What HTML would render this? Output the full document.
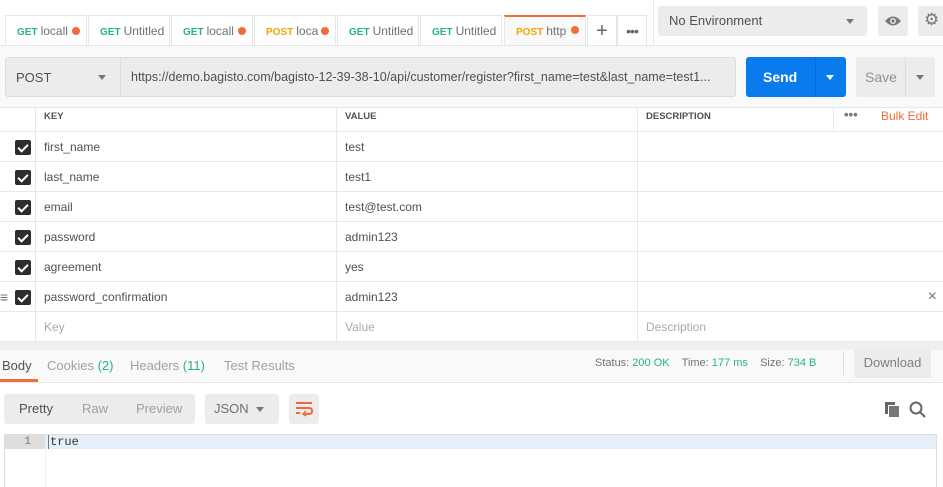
<!DOCTYPE html>
<html><head><style>
*{box-sizing:border-box;margin:0;padding:0}
body{width:943px;height:487px;overflow:hidden;background:#fff;font-family:"Liberation Sans",sans-serif;font-size:12px;color:#505050;position:relative}
.a{position:absolute}
.tab{position:absolute;top:15px;height:31px;width:82px;border:1px solid #e6e6e6;border-bottom:none;background:#fff;font-size:12px;line-height:31px;padding-left:11px;white-space:nowrap;overflow:hidden;color:#707070}
.g{color:#26b47f;font-weight:bold;font-size:10px;margin-right:3px}
.p{color:#f4a500;font-weight:bold;font-size:10px;margin-right:3px}
.dot{position:absolute;right:6px;top:11px;width:8px;height:8px;border-radius:50%;background:#f26b3a}
.row{position:absolute;left:0;width:943px;height:30px;border-bottom:1px solid #e8e8e8;font-size:12px;line-height:30px}
.row div{position:absolute;top:0;height:30px;padding-left:8px;border-left:1px solid #e8e8e8}
.cb{position:absolute;left:15px;top:8px;width:16px;height:15px;background:#2d2d2d;border-radius:2px}
.cb:after{content:"";position:absolute;left:5px;top:2px;width:4px;height:8px;border:solid #fff;border-width:0 2px 2px 0;transform:rotate(45deg)}
.btn{position:absolute;background:#ececec;border-radius:3px}
.car{position:absolute;width:0;height:0;border-left:4px solid transparent;border-right:4px solid transparent;border-top:5px solid #777}
</style></head><body>
<div class="tab" style="left:5px"><span class="g">GET</span>locall<span class="dot"></span></div>
<div class="tab" style="left:88px"><span class="g">GET</span>Untitled</div>
<div class="tab" style="left:171px"><span class="g">GET</span>locall<span class="dot"></span></div>
<div class="tab" style="left:254px"><span class="p">POST</span>loca<span class="dot"></span></div>
<div class="tab" style="left:337px"><span class="g">GET</span>Untitled</div>
<div class="tab" style="left:420px"><span class="g">GET</span>Untitled</div>
<div class="tab" style="left:504px;border-top:2px solid #f26b3a;background:#f9f9f9;line-height:29px"><span class="p">POST</span>http<span class="dot" style="top:9px"></span></div>
<div class="tab" style="left:587px;width:30px;padding:0;text-align:center;font-size:20px;color:#666">+</div>
<div class="tab" style="left:617px;width:30px;padding:0;text-align:center;font-size:14px;color:#666;letter-spacing:-1px">•••</div>
<div class="a" style="left:653px;top:0;width:1px;height:46px;background:#e6e6e6"></div>
<div class="a" style="left:0;top:45px;width:943px;height:62px;background:#f9f9f9;border-top:1px solid #e6e6e6"></div>
<div class="btn" style="left:658px;top:6px;width:209px;height:30px;font-size:13px;line-height:30px;padding-left:11px;color:#505050">No Environment</div>
<div class="car" style="left:846px;top:19px"></div>
<div class="btn" style="left:878px;top:6px;width:30px;height:30px"></div>
<svg class="a" style="left:884px;top:14px" width="18" height="14" viewBox="0 0 18 14"><path d="M1 7 Q9 -2 17 7 Q9 16 1 7Z" fill="#777"/><circle cx="9" cy="7" r="3" fill="#ececec"/><circle cx="9" cy="7" r="1.6" fill="#777"/></svg>
<div class="btn" style="left:918px;top:6px;width:30px;height:30px"></div>
<div class="a" style="left:924px;top:10px;font-size:17px;color:#777;line-height:20px">⚙</div>
<div class="a" style="left:5px;top:57px;width:731px;height:40px;background:#ececec;border:1px solid #ddd;border-radius:3px"></div>
<div class="a" style="left:120px;top:58px;width:1px;height:38px;background:#ddd"></div>
<div class="a" style="left:16px;top:70px;font-size:13px;color:#505050">POST</div>
<div class="car" style="left:98px;top:75px"></div>
<div class="a" style="left:131px;top:70px;font-size:12.5px;color:#505050;white-space:nowrap">https://demo.bagisto.com/bagisto-12-39-38-10/api/customer/register?first_name=test&amp;last_name=test1...</div>
<div class="a" style="left:746px;top:57px;width:100px;height:40px;background:#097bed;border-radius:3px"></div>
<div class="a" style="left:815px;top:57px;width:1px;height:40px;background:#0a6ad0"></div>
<div class="a" style="left:763px;top:69px;font-size:14px;font-weight:bold;color:#fff">Send</div>
<div class="car" style="left:826px;top:75px;border-top-color:#fff"></div>
<div class="btn" style="left:856px;top:57px;width:79px;height:40px"></div>
<div class="a" style="left:905px;top:58px;width:1px;height:38px;background:#ddd"></div>
<div class="a" style="left:865px;top:69px;font-size:14px;color:#909090">Save</div>
<div class="car" style="left:916px;top:75px"></div>
<div class="a" style="left:0;top:107px;width:943px;height:1px;background:#e8e8e8"></div>
<div class="row" style="top:107px;height:25px;line-height:20px;font-size:9.5px;font-weight:bold;color:#505050"><div style="left:35px;height:25px">KEY</div><div style="left:336px;height:25px">VALUE</div><div style="left:637px;height:25px">DESCRIPTION</div><div style="left:833px;height:25px;font-size:13px;color:#777;line-height:16px;padding-left:10px">•••</div><div style="left:870px;height:25px;border:none;color:#f26b3a;font-weight:normal;font-size:12px;line-height:19px;padding-left:11px">Bulk Edit</div></div>
<div class="row" style="top:132px"><span class="cb"></span><div style="left:35px">first_name</div><div style="left:336px">test</div><div style="left:637px"></div></div>
<div class="row" style="top:162px"><span class="cb"></span><div style="left:35px">last_name</div><div style="left:336px">test1</div><div style="left:637px"></div></div>
<div class="row" style="top:192px"><span class="cb"></span><div style="left:35px">email</div><div style="left:336px">test@test.com</div><div style="left:637px"></div></div>
<div class="row" style="top:222px"><span class="cb"></span><div style="left:35px">password</div><div style="left:336px">admin123</div><div style="left:637px"></div></div>
<div class="row" style="top:252px"><span class="cb"></span><div style="left:35px">agreement</div><div style="left:336px">yes</div><div style="left:637px"></div></div>
<div class="row" style="top:282px"><span style="position:absolute;left:0;top:0;font-size:14px;color:#777">≡</span><span class="cb"></span><div style="left:35px">password_confirmation</div><div style="left:336px">admin123</div><div style="left:637px"></div><span style="position:absolute;right:6px;top:0;font-size:16px;color:#777">×</span></div>
<div class="row" style="top:312px;color:#aaa"><div style="left:35px">Key</div><div style="left:336px">Value</div><div style="left:637px">Description</div></div>
<div class="a" style="left:0;top:342px;width:943px;height:8px;background:#f0f0f0"></div>
<div class="a" style="left:0;top:350px;width:943px;height:33px;background:#f9f9f9;border-bottom:1px solid #e6e6e6"></div>
<div class="a" style="left:2px;top:358px;font-size:13px;color:#505050">Body</div>
<div class="a" style="left:0;top:379px;width:38px;height:3px;background:#f26b3a"></div>
<div class="a" style="left:47px;top:358px;font-size:13px;color:#a0a0a0">Cookies <span style="color:#26b47f">(2)</span></div>
<div class="a" style="left:130px;top:358px;font-size:13px;color:#a0a0a0">Headers <span style="color:#26b47f">(11)</span></div>
<div class="a" style="left:224px;top:358px;font-size:13px;color:#a0a0a0">Test Results</div>
<div class="a" style="left:595px;top:357px;font-size:11px;color:#707070;white-space:nowrap">Status: <span style="color:#26b47f">200 OK</span>&nbsp;&nbsp;&nbsp; Time: <span style="color:#26b47f">177 ms</span>&nbsp;&nbsp;&nbsp; Size: <span style="color:#26b47f">734 B</span></div>
<div class="a" style="left:843px;top:351px;width:1px;height:24px;background:#ddd"></div>
<div class="btn" style="left:854px;top:348px;width:77px;height:30px;line-height:30px;text-align:center;font-size:13px;color:#808080">Download</div>
<div class="btn" style="left:4px;top:394px;width:191px;height:30px;font-size:13px;line-height:30px"><span class="a" style="left:15px;color:#505050">Pretty</span><span class="a" style="left:78px;color:#a0a0a0">Raw</span><span class="a" style="left:132px;color:#a0a0a0">Preview</span></div>
<div class="btn" style="left:205px;top:394px;width:74px;height:30px;font-size:13px;line-height:30px;padding-left:9px;color:#707070">JSON</div>
<div class="car" style="left:256px;top:407px"></div>
<div class="btn" style="left:289px;top:394px;width:30px;height:30px"></div>
<svg class="a" style="left:295px;top:401px" width="18" height="16" viewBox="0 0 18 16"><g stroke="#f26b3a" stroke-width="2" fill="none"><path d="M1 2H17M1 7H14Q17 7 17 10Q17 13 14 13H9M1 12H5"/><path d="M11 10L8 13L11 15" stroke-width="1.5"/></g></svg>
<div class="a" style="left:885px;top:402px;width:10px;height:12px;background:#666"></div>
<div class="a" style="left:888px;top:405px;width:11px;height:12px;background:#777;border-left:1px solid #fff;border-top:1px solid #fff"></div>
<svg class="a" style="left:909px;top:401px" width="18" height="18" viewBox="0 0 18 18"><circle cx="7" cy="7" r="5.5" stroke="#666" stroke-width="2" fill="none"/><path d="M11 11L16 16" stroke="#666" stroke-width="2"/></svg>
<div class="a" style="left:4px;top:434px;width:933px;height:53px;border:1px solid #ddd;border-bottom:none;background:#fff"></div>
<div class="a" style="left:45px;top:435px;width:1px;height:52px;background:#eee"></div>
<div class="a" style="left:5px;top:435px;width:40px;height:14px;background:#ddd;text-align:right;padding-right:14px;font-family:'Liberation Mono',monospace;font-size:11px;color:#777;line-height:14px">1</div>
<div class="a" style="left:45px;top:435px;width:891px;height:14px;background:#e5effa"></div>
<div class="a" style="left:48px;top:435px;font-family:'Liberation Mono',monospace;font-size:12px;color:#333;line-height:14px;border-left:1px solid #777;padding-left:1px">true</div>
</body></html>
